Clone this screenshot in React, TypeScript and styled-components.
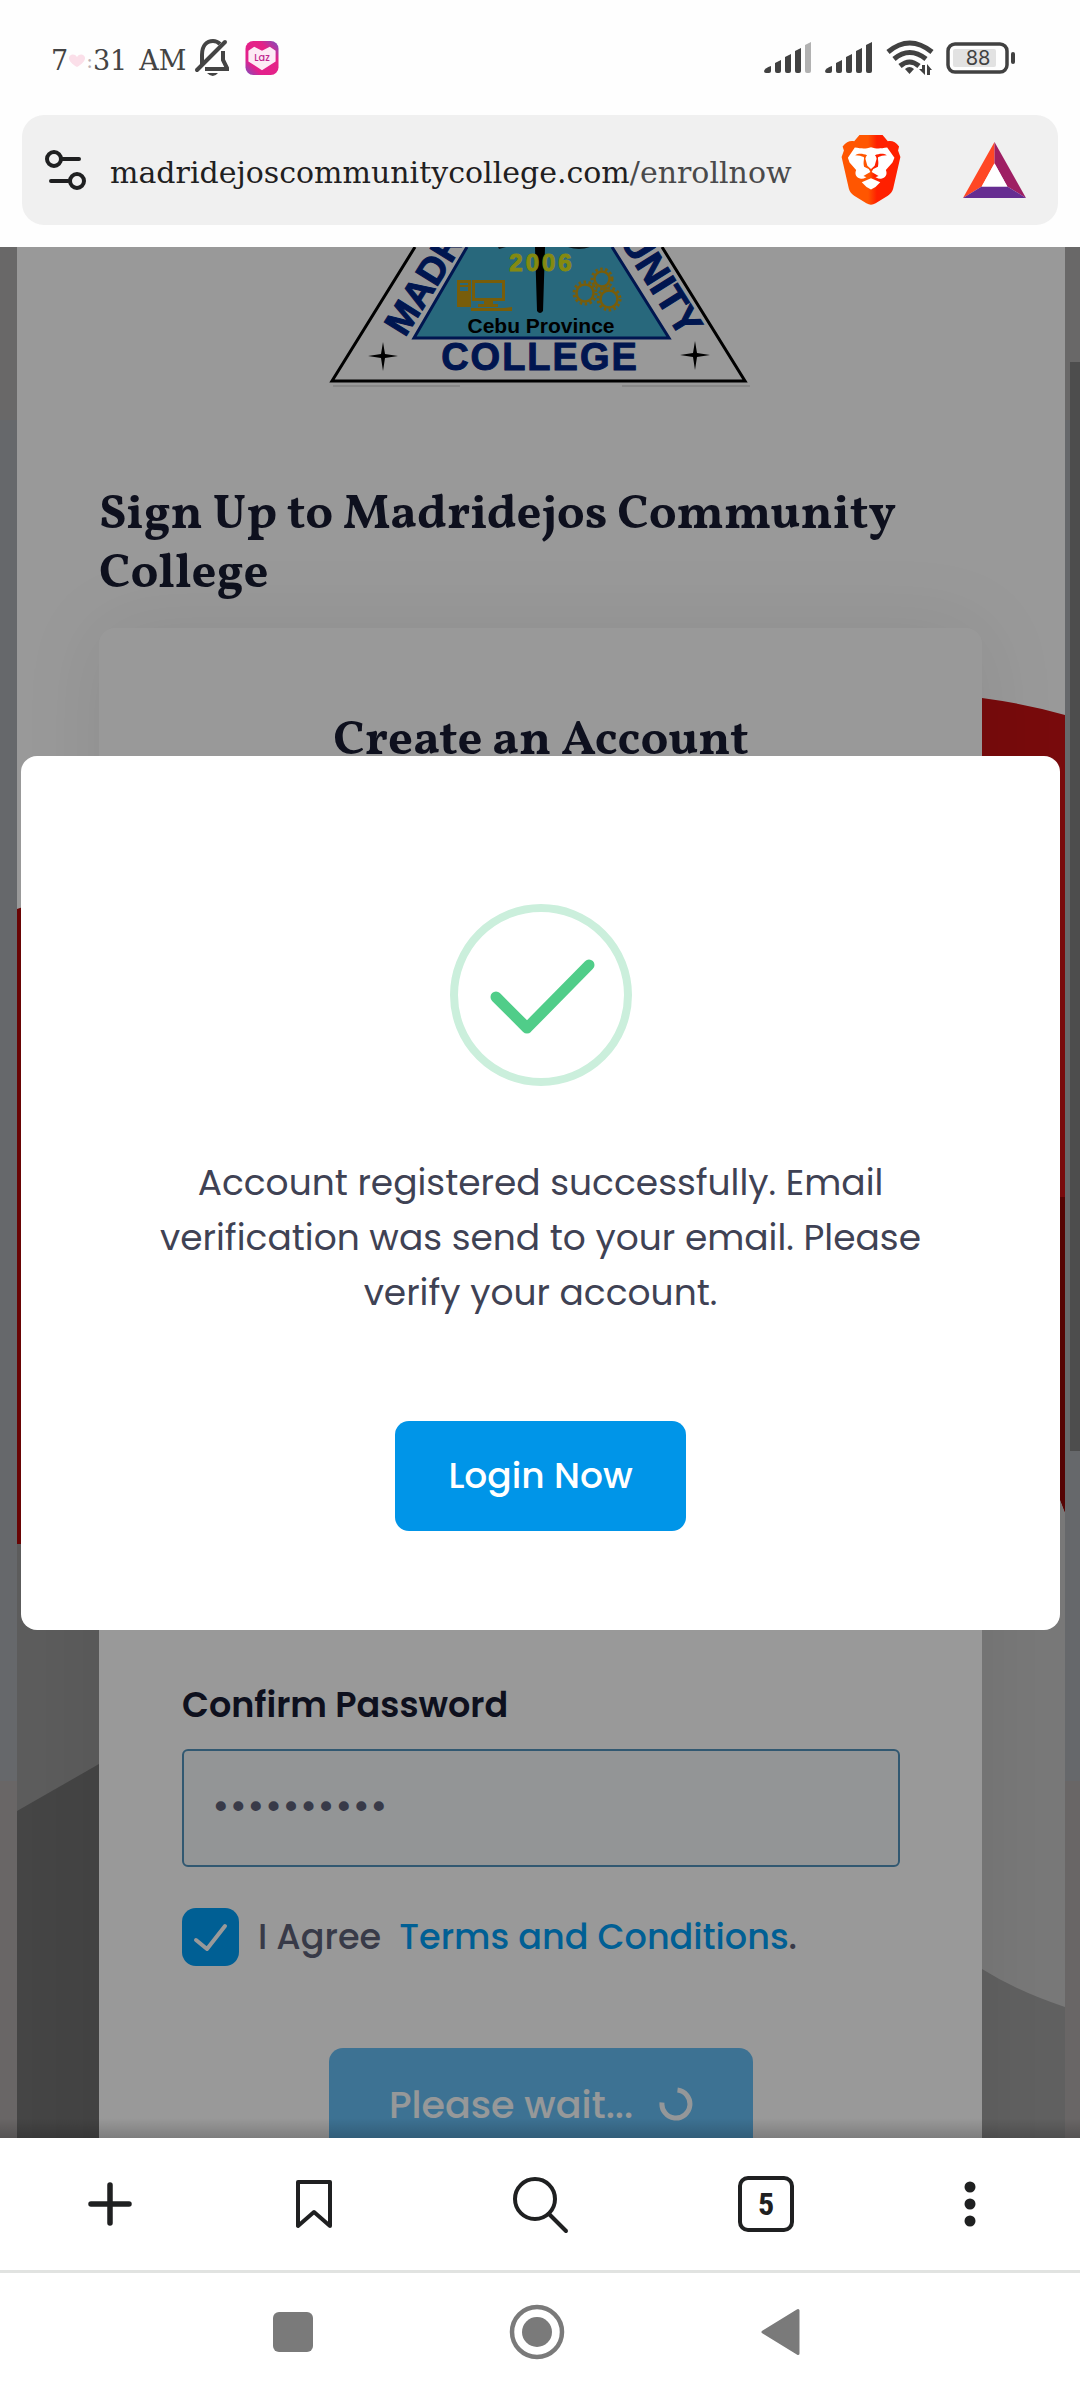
import React from 'react';
import styled, { createGlobalStyle } from 'styled-components';

const SANS = "'Poppins', 'Inter', 'Open Sans', sans-serif";
const SERIF = "'Vollkorn', 'Liberation Serif', serif";
const SLAB = "'DejaVu Serif', serif";

const GlobalStyle = createGlobalStyle`
  * { box-sizing: border-box; }
  body { margin: 0; background: #ffffff; }
  button, input { font: inherit; }
  svg { display: block; flex: none; }
`;

const Screen = styled.div`
  height: 100vh;
  display: flex;
  flex-direction: column;
  background: #fefefe;
`;

/* ---------- system status bar ---------- */

const StatusBar = styled.header`
  height: 115px;
  flex: none;
  display: flex;
  align-items: center;
  justify-content: space-between;
  padding: 0 64px 0 51px;
`;

const StatusGroup = styled.div<{ $gap: number }>`
  display: flex;
  align-items: center;
  gap: ${(p) => p.$gap}px;
`;

const Clock = styled.div`
  display: flex;
  align-items: center;
  font: 27px/40px ${SLAB};
  color: #444444;
  padding-top: 6px;
`;

const Period = styled.span`
  padding-left: 12px;
`;

const Colon = styled.span`
  font-size: 20px;
  color: #b8b0b4;
`;

/* ---------- browser address bar ---------- */

const AddressBar = styled.div`
  height: 110px;
  flex: none;
  display: flex;
  align-items: center;
  margin: 0 22px 22px;
  padding: 0 32px 0 22px;
  border-radius: 22px;
  background: #f0f0f0;
`;

const IconButton = styled.button`
  display: flex;
  align-items: center;
  justify-content: center;
  padding: 0;
  border: 0;
  background: none;
  color: #1f2021;
`;

const Url = styled.span`
  flex: 1;
  padding: 5px 0 0 23px;
  font: 30px/40px ${SLAB};
  color: #1f2021;
  white-space: nowrap;
`;

const UrlPath = styled.span`
  color: #4a4a4b;
`;

const Extensions = styled.div`
  display: flex;
  align-items: center;
  gap: 62px;
`;

/* ---------- web page ---------- */

const Viewport = styled.main`
  position: relative;
  flex: 1;
  min-height: 0;
  overflow: hidden;
  display: flex;
  padding: 0 15px 0 17px;
  background: linear-gradient(#b0aeae 0 173px, #aaadb2 173px 1534px, #b0abab 1534px);
`;

const Panel = styled.section`
  position: relative;
  flex: 1;
  display: flex;
  flex-direction: column;
  height: max-content;
  min-height: 100%;
  padding: 0 83px 0 82px;
  background: #ffffff;
`;

const Wallpaper = styled.svg`
  position: absolute;
  inset: 0;
  width: 100%;
  height: 1891px;
`;

const LogoRow = styled.div`
  display: flex;
  justify-content: center;
`;

const Heading = styled.h1`
  position: relative;
  margin: 94px 0 24px;
  font: 700 49px/59px ${SERIF};
  color: #181c32;
`;

const Card = styled.form`
  position: relative;
  display: flex;
  flex-direction: column;
  padding: 84px 82px 96px 83px;
  border-radius: 16px;
  background: #ffffff;
  box-shadow: 0 0 84px rgba(0, 0, 0, 0.08);
`;

const CardTitle = styled.h2`
  margin: 0 0 909px;
  font: 700 49px/59px ${SERIF};
  text-align: center;
  color: #181c32;
`;

const FieldLabel = styled.label`
  margin-bottom: 19px;
  font: 600 35px/50px ${SANS};
  color: #181c32;
`;

const PasswordInput = styled.input`
  width: 100%;
  height: 118px;
  padding: 0 28px 6px;
  border: 2px solid #5393bc;
  border-radius: 6px;
  background: #f5f8fa;
  color: #5e6278;
  font: 500 38px/50px ${SANS};
  outline: none;
`;

const AgreeRow = styled.div`
  display: flex;
  align-items: center;
  gap: 19px;
  margin: 41px 0 82px;
  font: 500 35px/58px ${SANS};
  color: #5e6278;
`;

const TickBox = styled.input`
  appearance: none;
  flex: none;
  width: 57px;
  height: 58px;
  margin: 0;
  border-radius: 14px;
  background: #009ef7
    url("data:image/svg+xml,%3Csvg xmlns='http://www.w3.org/2000/svg' viewBox='0 0 57 58'%3E%3Cpath d='M14 32L25 41L43 18' fill='none' stroke='white' stroke-width='4' stroke-linecap='round' stroke-linejoin='round'/%3E%3C/svg%3E")
    center / 100% 100%;
`;

const AgreeText = styled.label`
  white-space: nowrap;
`;

const TermsLink = styled.a`
  color: #009ef7;
  text-decoration: none;
`;

const WaitButton = styled.button`
  display: flex;
  align-items: center;
  align-self: center;
  gap: 26px;
  height: 112px;
  padding: 0 60px;
  border: 0;
  border-radius: 14px;
  background: #67bff5;
  color: #fafeff;
  font: 500 38px/55px ${SANS};
`;

/* ---------- dialog over the page ---------- */

const Backdrop = styled.div`
  position: absolute;
  inset: 0;
  display: flex;
  align-items: center;
  padding: 0 20px 0 21px;
  background: rgba(0, 0, 0, 0.4);
`;

const Dialog = styled.div`
  flex: 1;
  display: flex;
  flex-direction: column;
  align-items: center;
  padding: 148px 120px 99px;
  border-radius: 16px;
  background: #ffffff;
`;

const Message = styled.p`
  margin: 69px 0 101px;
  font: 400 36px/55px ${SANS};
  text-align: center;
  color: #3f4254;
`;

const LoginButton = styled.button`
  height: 110px;
  padding: 0 53px;
  border: 0;
  border-radius: 14px;
  background: #0095e8;
  color: #ffffff;
  font: 500 36px/55px ${SANS};
`;

const ScrollThumb = styled.div`
  position: absolute;
  top: 115px;
  right: 0;
  width: 10px;
  height: 1089px;
  background: #4d4d4d;
`;

const EdgeShade = styled.div`
  position: absolute;
  left: 0;
  right: 0;
  bottom: 0;
  height: 20px;
  background: linear-gradient(rgba(0, 0, 0, 0), rgba(0, 0, 0, 0.18));
`;

/* ---------- browser toolbar and system navigation ---------- */

const Toolbar = styled.nav`
  height: 135px;
  flex: none;
  display: flex;
  align-items: center;
  justify-content: space-between;
  padding: 0 80px;
  background: #ffffff;
  border-bottom: 3px solid #e1e3e1;
`;

const ToolButton = styled(IconButton)<{ $wide?: boolean }>`
  width: ${(p) => (p.$wide ? 104 : 60)}px;
  height: 60px;
`;

const TabCount = styled(IconButton)`
  width: 56px;
  height: 56px;
  margin: 0 2px;
  border: 4px solid #1f2021;
  border-radius: 10px;
  font: 700 32px/40px 'Roboto Condensed', 'Roboto', sans-serif;
`;

const SystemNav = styled.nav`
  height: 127px;
  flex: none;
  display: flex;
  align-items: center;
  justify-content: center;
  gap: 184px;
  padding: 0 6px 9px 0;
  background: #ffffff;
`;

const NavButton = styled(IconButton)`
  width: 60px;
  height: 60px;
  color: #7a7a7a;
`;

/* ---------- drawings ---------- */

const Heart = () => (
  <svg width="18" height="16" viewBox="0 0 18 16">
    <path d="M9 14C4 11 1 8 1 5C1 1 7 0 9 4C11 0 17 1 17 5C17 8 14 11 9 14Z" fill="#fbdfe9" />
  </svg>
);

const MutedBell = () => (
  <svg width="36" height="38" viewBox="193 40 36 38" fill="none" stroke="#444" strokeWidth="4">
    <path d="M201 65V56C201 46 206 42 212 42C215 42 217 43 219 45M222 52V61L226 69V70H204" />
    <path d="M196 71L224 43" strokeLinecap="round" strokeWidth="4" />
    <path d="M206 74H217Q212 80 206 74Z" fill="#444" stroke="none" />
  </svg>
);

const LazApp = () => (
  <svg width="34" height="34" viewBox="0 0 34 35">
    <defs>
      <linearGradient id="laz" x1="1" y1="0" x2="0" y2="1">
        <stop offset="0" stopColor="#7a50c0" />
        <stop offset="0.3" stopColor="#e52286" />
        <stop offset="0.75" stopColor="#e3208c" />
        <stop offset="1" stopColor="#7a50c0" />
      </linearGradient>
    </defs>
    <rect width="34" height="35" rx="8" fill="url(#laz)" />
    <path d="M3 10L9 6L17 10L25 6L31 10V21L17 30L3 21Z" fill="#fdeaf5" />
    <text x="17" y="21" textAnchor="middle" fontFamily="Poppins, Inter, sans-serif" fontWeight="500" fontSize="10" fill="#c0268f">
      Laz
    </text>
  </svg>
);

const Signal = ({ weak }: { weak?: boolean }) => (
  <svg width="49" height="32" viewBox="0 0 49 32" fill="#414141">
    <path d="M0 29Q1 26 7 24V29Q7 31 5 31H2Q0 31 0 29Z" />
    <path d="M11 21L17 18V29Q17 31 15 31H13Q11 31 11 29Z" />
    <path d="M21 15L27 12V29Q27 31 25 31H23Q21 31 21 29Z" />
    <path d="M31 9L37 6V29Q37 31 35 31H33Q31 31 31 29Z" />
    <path d="M41 3L47 0V29Q47 31 45 31H43Q41 31 41 29Z" fill={weak ? '#b2b2b2' : '#414141'} />
  </svg>
);

const Wifi = () => (
  <svg width="48" height="36" viewBox="884 41 48 36" fill="none" stroke="#414141">
    <path d="M886 53Q907.5 35 930 53" strokeWidth="5" />
    <path d="M892 60Q907.5 47 924 60" strokeWidth="5" />
    <path d="M898 67Q907.5 59 917 67" strokeWidth="5" />
    <path d="M903 70Q907.5 66 912 70L907.5 75Z" fill="#414141" stroke="none" />
    <path d="M920 66H923V76L917 70H920ZM925 76V65L930 71H928V76Z" fill="#414141" stroke="none" />
  </svg>
);

const Battery = () => (
  <svg width="70" height="32" viewBox="0 0 70 32">
    <rect x="2" y="2" width="59" height="28" rx="7" fill="none" stroke="#414141" strokeWidth="3.5" />
    <rect x="7" y="7" width="43" height="18" rx="2" fill="#e2e2e2" />
    <rect x="65" y="10" width="4" height="12" rx="2" fill="#414141" />
    <text x="32" y="23" textAnchor="middle" fontFamily="Inter, sans-serif" fontSize="20" fill="#414141">
      88
    </text>
  </svg>
);

const Tune = () => (
  <svg width="43" height="42" viewBox="0 0 43 42" fill="none" stroke="#1f2021" strokeWidth="4" strokeLinecap="round">
    <circle cx="10" cy="10" r="7" />
    <path d="M18 10H35M7 32H24" />
    <circle cx="33" cy="32" r="7" />
  </svg>
);

const BraveLion = () => (
  <svg width="60" height="70" viewBox="31 15 180 212">
    <defs>
      <linearGradient id="brave">
        <stop offset="0.45" stopColor="#ff5601" />
        <stop offset="0.6" stopColor="#ff2000" />
      </linearGradient>
    </defs>
    <path
      d="M86 15H156L172 34C184 31 196 36 206 50L203 62L210 82L188 178C185 188 180 194 172 199L135 222Q121 230 107 222L70 199C62 194 57 188 54 178L32 82L39 62L35 50C46 36 58 31 70 34Z"
      fill="url(#brave)"
    />
    <path
      d="M72 53C92 56 104 58 121 52C138 58 150 56 170 53L192 84L186 98L166 121C171 133 167 143 154 147C144 150 136 144 121 132C106 144 98 150 88 147C75 143 71 133 76 121L56 98L51 84Z"
      fill="#ffffff"
    />
    <path
      d="M73 76C85 69 97 72 109 76Q105 80 104 87L110 108L121 118L132 108L138 87Q137 80 133 76C145 72 157 69 169 76C158 77 149 78 143 82C140 88 146 96 142 111L128 118Q125 122 123 127L144 139L121 148L98 139L119 127Q117 122 114 118L100 111C96 96 102 88 99 82C93 78 84 77 73 76Z"
      fill="url(#brave)"
    />
    <path d="M93 158L121 146L149 158Q136 174 121 180Q106 174 93 158Z" fill="#ffffff" />
  </svg>
);

const BatTriangle = () => (
  <svg width="63" height="56" viewBox="0 0 64 58" preserveAspectRatio="none">
    <path d="M32 0L0 58L19 46L32 22Z" fill="#ff4724" />
    <path d="M32 0L64 58L45 46L32 22Z" fill="#9e1f63" />
    <path d="M0 58H64L45 46H19Z" fill="#662d91" />
    <path d="M32 22L19 46H45Z" fill="#ffffff" />
  </svg>
);

const Gear = ({ x, y, r }: { x: number; y: number; r: number }) => (
  <g fill="none" stroke="#c99b12">
    <circle cx={x} cy={y} r={r - 2.5} strokeWidth="2.5" />
    <circle cx={x} cy={y} r={r} strokeWidth="3" strokeDasharray="2.5 2.5" />
  </g>
);

const CollegeLogo = () => (
  <svg width="430" height="145" viewBox="326 247 430 145">
    <path d="M415 247L332 381H745L662 247" fill="#ffffff" stroke="#000" strokeWidth="3" />
    <path d="M467 247L414 338H669L612 247" fill="#43adcf" stroke="#002585" strokeWidth="3" />
    <path d="M498 247H506L499 249ZM568 247H590Q579 251 568 247Z" fill="#1c2a30" />
    <path d="M535 247H545L543 311Q540 315 537 311Z" fill="#000" />
    <g fontFamily="'Liberation Sans', Arial, sans-serif" fontWeight="700">
      <text x="542" y="271" fontSize="24" textAnchor="middle" fill="#dde61c" stroke="#dde61c" letterSpacing="3">
        2006
      </text>
      <text x="541" y="333" fontSize="21" textAnchor="middle" fill="#000">
        Cebu Province
      </text>
      <g fill="#002585" stroke="#002585">
        <text x="540" y="370" fontSize="38" textAnchor="middle" letterSpacing="2">
          COLLEGE
        </text>
        <text transform="translate(405 338) rotate(-58)" fontSize="38">
          MADR
        </text>
        <text transform="translate(681 339) rotate(58)" fontSize="39" textAnchor="end">
          UNITY
        </text>
      </g>
    </g>
    <path d="M383 342L385 354L398 356L385 358L383 371L381 358L368 356L381 354Z" fill="#000" />
    <path d="M695 341L697 353L710 355L697 357L695 370L693 357L680 355L693 353Z" fill="#000" />
    <g fill="#c99b12">
      <path d="M457 280H471V307H457ZM460 283V285H468V283ZM460 287V291H468V287Z" fillRule="evenodd" />
      <path d="M472 280H505V301H472ZM475 283V298H502V283Z" fillRule="evenodd" />
      <path d="M484 301H493V304H498V307H478V304H484ZM471 308H504L512 307V311H471Z" />
    </g>
    <Gear x={602} y={279} r={10} />
    <Gear x={585} y={293} r={11} />
    <Gear x={609} y={299} r={11} />
    <path d="M333 386H460M622 386H750" stroke="#c5c5c5" strokeWidth="1" />
  </svg>
);

const PanelWallpaper = () => (
  <Wallpaper viewBox="0 0 1048 1891" preserveAspectRatio="none" aria-hidden="true">
    <path d="M883 451H965Q1010 457 1048 468V1266L1038 1240H883Z" fill="#c81214" />
    <path d="M1038 950H1048V1266L1038 1240Z" fill="#8e0505" />
    <path d="M0 662L30 652V1297H0Z" fill="#b00808" />
    <path d="M0 1297H82V1891H0Z" fill="#9a9a9a" />
    <path d="M0 1564L82 1517V1891H0Z" fill="#737373" />
    <path d="M965 1240H1038L1048 1266V1891H965Z" fill="#c9c9c9" />
    <path d="M965 1722Q1000 1744 1048 1760V1891H965Z" fill="#a1a1a1" />
  </Wallpaper>
);

const SuccessMark = () => (
  <svg width="182" height="182" viewBox="0 0 182 182" fill="none">
    <circle cx="91" cy="91" r="87" stroke="#cbefdc" strokeWidth="8" />
    <path d="M46 93L77 124L139 61" stroke="#50cd89" strokeWidth="11" strokeLinecap="round" strokeLinejoin="round" />
  </svg>
);

const Spinner = () => (
  <svg width="34" height="34" viewBox="0 0 34 34" fill="none">
    <path d="M18.5 3.1A14 14 0 1 1 3 15.5" stroke="#f7fcff" strokeWidth="5" />
  </svg>
);

export default function App() {
  return (
    <Screen>
      <GlobalStyle />
      <StatusBar>
        <StatusGroup $gap={15}>
          <StatusGroup $gap={8}>
            <Clock>
              7<Heart />
              <Colon>:</Colon>
              31<Period>AM</Period>
            </Clock>
            <MutedBell />
          </StatusGroup>
          <LazApp />
        </StatusGroup>
        <StatusGroup $gap={12}>
          <Signal weak />
          <Signal />
          <Wifi />
          <Battery />
        </StatusGroup>
      </StatusBar>

      <AddressBar>
        <IconButton type="button" aria-label="Site settings">
          <Tune />
        </IconButton>
        <Url>
          madridejoscommunitycollege.com<UrlPath>/enrollnow</UrlPath>
        </Url>
        <Extensions>
          <IconButton type="button" aria-label="Brave Shields">
            <BraveLion />
          </IconButton>
          <IconButton type="button" aria-label="Brave Rewards">
            <BatTriangle />
          </IconButton>
        </Extensions>
      </AddressBar>

      <Viewport>
        <Panel>
          <PanelWallpaper />
          <LogoRow>
            <CollegeLogo />
          </LogoRow>
          <Heading>Sign Up to Madridejos Community College</Heading>
          <Card>
            <CardTitle>Create an Account</CardTitle>
            <FieldLabel htmlFor="confirm">Confirm Password</FieldLabel>
            <PasswordInput id="confirm" type="password" defaultValue="0123456789" />
            <AgreeRow>
              <TickBox id="agree" type="checkbox" defaultChecked />
              <AgreeText htmlFor="agree">
                I Agree &nbsp;<TermsLink href="#terms">Terms and Conditions</TermsLink>.
              </AgreeText>
            </AgreeRow>
            <WaitButton type="button">
              Please wait...
              <Spinner />
            </WaitButton>
          </Card>
        </Panel>
        <Backdrop>
          <Dialog role="dialog" aria-modal="true">
            <SuccessMark />
            <Message>
              Account registered successfully. Email verification was send to your email. Please verify your account.
            </Message>
            <LoginButton type="button">Login Now</LoginButton>
          </Dialog>
        </Backdrop>
        <ScrollThumb />
        <EdgeShade />
      </Viewport>

      <Toolbar>
        <ToolButton type="button" aria-label="New tab">
          <svg width="60" height="60" viewBox="0 0 60 60" stroke="#1f2021" strokeWidth="5.5" strokeLinecap="round">
            <path d="M30 11V49M11 30H49" />
          </svg>
        </ToolButton>
        <ToolButton type="button" aria-label="Bookmarks">
          <svg width="60" height="60" viewBox="0 0 60 60" fill="none" stroke="#1f2021" strokeWidth="4" strokeLinejoin="round">
            <path d="M14 8H46V52L30 38L14 52Z" />
          </svg>
        </ToolButton>
        <ToolButton type="button" aria-label="Search" $wide>
          <svg width="60" height="60" viewBox="0 0 60 60" fill="none" stroke="#1f2021" strokeWidth="4" strokeLinecap="round">
            <circle cx="25" cy="25" r="20" />
            <path d="M39 40L56 57" />
          </svg>
        </ToolButton>
        <TabCount type="button" aria-label="Open tabs">
          5
        </TabCount>
        <ToolButton type="button" aria-label="Menu">
          <svg width="60" height="60" viewBox="0 0 60 60" fill="#1f2021">
            <circle cx="30" cy="13" r="5.5" />
            <circle cx="30" cy="30" r="5.5" />
            <circle cx="30" cy="47" r="5.5" />
          </svg>
        </ToolButton>
      </Toolbar>

      <SystemNav>
        <NavButton type="button" aria-label="Recent apps">
          <svg width="60" height="60" viewBox="0 0 60 60" fill="currentColor">
            <rect x="10" y="10" width="40" height="40" rx="6" />
          </svg>
        </NavButton>
        <NavButton type="button" aria-label="Home">
          <svg width="60" height="60" viewBox="0 0 60 60" fill="currentColor">
            <circle cx="30" cy="30" r="25" fill="none" stroke="currentColor" strokeWidth="4.5" />
            <circle cx="30" cy="30" r="15" />
          </svg>
        </NavButton>
        <NavButton type="button" aria-label="Back">
          <svg width="60" height="60" viewBox="0 0 60 60" fill="currentColor" stroke="currentColor" strokeWidth="3" strokeLinejoin="round">
            <path d="M12 30L47 8.5V51.5Z" />
          </svg>
        </NavButton>
      </SystemNav>
    </Screen>
  );
}
